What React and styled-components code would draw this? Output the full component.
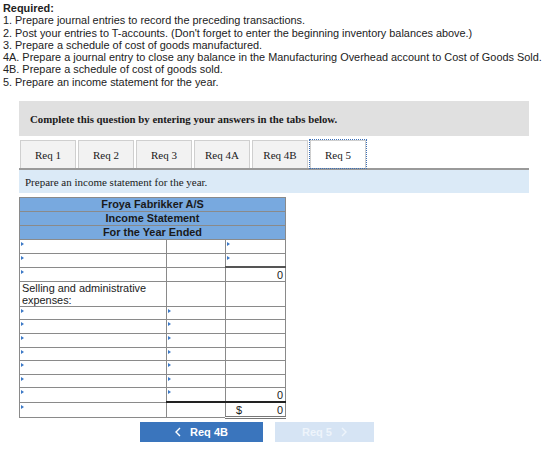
import React from 'react';
import styled, { createGlobalStyle } from 'styled-components';

const GlobalStyle = createGlobalStyle`
    body {
        margin: 0;
        background: #fff;
        font-family: "Liberation Sans", Arial, sans-serif;
        color: #1a1a1a;
    }
`

const Page = styled.div`
    width: 560px;
    padding: 2px 0 0 3px;
    box-sizing: border-box;
`
const Required = styled.div`
    font-size: 10.9px;
    line-height: 12.3px;
    color: #222;
`
const Main = styled.div`
    margin: 13px 0 0 16px;
    width: 510px;
`
const Instruction = styled.div`
    background: #e0e0e0;
    height: 35px;
    display: flex;
    align-items: center;
    padding-left: 11px;
    font-family: "Liberation Serif", "Times New Roman", serif;
    font-weight: bold;
    font-size: 10.8px;
`
const TabBar = styled.div`
    display: flex;
    gap: 2px;
    margin-top: 4px;
    padding-left: 1px;
    border-bottom: 2px solid #9a9a9a;
`
const Tab = styled.div`
    width: 56px;
    height: 28px;
    box-sizing: border-box;
    display: flex;
    align-items: center;
    justify-content: center;
    font-family: "Liberation Serif", "Times New Roman", serif;
    font-size: 11px;
    background: ${p => (p.$active ? '#fff' : '#f2f2f2')};
    border: 1px solid #cfcfcf;
    border-bottom: none;
    outline: ${p => (p.$active ? '1px dotted #3a6fb8' : 'none')};
    outline-offset: 0px;
`
const Hint = styled.div`
    background: #dbeaf7;
    height: 23px;
    display: flex;
    align-items: center;
    padding-left: 6px;
    font-family: "Liberation Serif", "Times New Roman", serif;
    font-size: 11px;
`
const Sheet = styled.table`
    margin-top: 4px;
    border-collapse: collapse;
    width: 266px;
    font-size: 10.9px;
    table-layout: fixed;
`
const Head = styled.td`
    background: #78a9df;
    border: 1px solid #8a8a8a;
    text-align: center;
    font-weight: bold;
    height: 13px;
    padding: 0;
    line-height: 13px;
`
const Cell = styled.td`
    position: relative;
    border: 1px solid #8a8a8a;
    border-top: ${p => p.$rule || '1px solid #8a8a8a'};
    height: 12.6px;
    padding: 0 2px;
    line-height: 12px;
    text-align: ${p => (p.$num ? 'right' : 'left')};
    vertical-align: ${p => (p.$num ? 'bottom' : 'top')};

    &::before {
        content: '';
        display: ${p => (p.$mark ? 'block' : 'none')};
        position: absolute;
        left: 1px;
        top: 2px;
        border-left: 3px solid #3b78c6;
        border-top: 2px solid transparent;
        border-bottom: 2px solid transparent;
    }
`
const Money = styled.span`
    display: flex;
    justify-content: space-between;
    padding-left: 8px;
`
const Nav = styled.div`
    display: flex;
    gap: 12px;
    margin: 3px 0 0 121px;
`
const NavButton = styled.div`
    width: ${p => p.$w}px;
    height: 20px;
    display: flex;
    align-items: center;
    justify-content: center;
    gap: 9px;
    background: ${p => (p.$off ? '#d6e4f4' : '#3a75bd')};
    color: ${p => (p.$off ? '#eef4fb' : '#fff')};
    font-weight: bold;
    font-size: 11px;
`
const Chevron = ({ dir }) => (
    <svg width="6" height="10" viewBox="0 0 6 10">
        <path
            d={dir === 'left' ? 'M5 1 L1 5 L5 9' : 'M1 1 L5 5 L1 9'}
            fill="none"
            stroke="currentColor"
            strokeWidth="1.4"
        />
    </svg>
)

const tabs = ['Req 1', 'Req 2', 'Req 3', 'Req 4A', 'Req 4B', 'Req 5'];

// revenue and cost rows above the expenses
const rows = [
    { a: true, c: { mark: true } },
    { a: true, c: { mark: true } },
    { a: true, c: { text: '0', rule: '2px solid #555' } },
];
const expenseRows = [
    { a: true, b: true },
    { a: true, b: true },
    { a: true, b: true },
    { a: true, b: true },
    { a: true, b: true },
    { a: true, b: true },
    { a: true, b: true, total: '0' },
];

const App = () => {
    return (
        <Page>
            <GlobalStyle />
            <Required>
                <b>Required:</b><br />
                1. Prepare journal entries to record the preceding transactions.<br />
                2. Post your entries to T-accounts. (Don't forget to enter the beginning inventory balances above.)<br />
                3. Prepare a schedule of cost of goods manufactured.<br />
                4A. Prepare a journal entry to close any balance in the Manufacturing Overhead account to Cost of Goods Sold.<br />
                4B. Prepare a schedule of cost of goods sold.<br />
                5. Prepare an income statement for the year.
            </Required>
            <Main>
                <Instruction>Complete this question by entering your answers in the tabs below.</Instruction>
                <TabBar>
                    {tabs.map(t => (
                        <Tab key={t} $active={t === 'Req 5'}>{t}</Tab>
                    ))}
                </TabBar>
                <Hint>Prepare an income statement for the year.</Hint>
                <Sheet>
                    <colgroup>
                        <col style={{ width: 147 }} />
                        <col style={{ width: 59 }} />
                        <col style={{ width: 60 }} />
                    </colgroup>
                    <tbody>
                        <tr><Head colSpan={3}>Froya Fabrikker A/S</Head></tr>
                        <tr><Head colSpan={3}>Income Statement</Head></tr>
                        <tr><Head colSpan={3}>For the Year Ended</Head></tr>
                        {rows.map((r, i) => (
                            <tr key={'r' + i}>
                                <Cell $mark={r.a} />
                                <Cell />
                                <Cell $mark={r.c.mark} $num $rule={r.c.rule}>{r.c.text}</Cell>
                            </tr>
                        ))}
                        <tr>
                            <Cell>Selling and administrative expenses:</Cell>
                            <Cell />
                            <Cell />
                        </tr>
                        {expenseRows.map((r, i) => (
                            <tr key={'e' + i}>
                                <Cell $mark={r.a} />
                                <Cell $mark={r.b} />
                                <Cell $num>{r.total}</Cell>
                            </tr>
                        ))}
                        <tr>
                            <Cell $mark />
                            <Cell $rule="2px solid #222" />
                            <Cell $num $rule="2px solid #222" style={{ borderBottom: '3px double #777' }}>
                                <Money><span>$</span><span>0</span></Money>
                            </Cell>
                        </tr>
                    </tbody>
                </Sheet>
                <Nav>
                    <NavButton $w={123}><Chevron dir="left" />Req 4B</NavButton>
                    <NavButton $w={99} $off>Req 5<Chevron dir="right" /></NavButton>
                </Nav>
            </Main>
        </Page>
    )
}

export default App
